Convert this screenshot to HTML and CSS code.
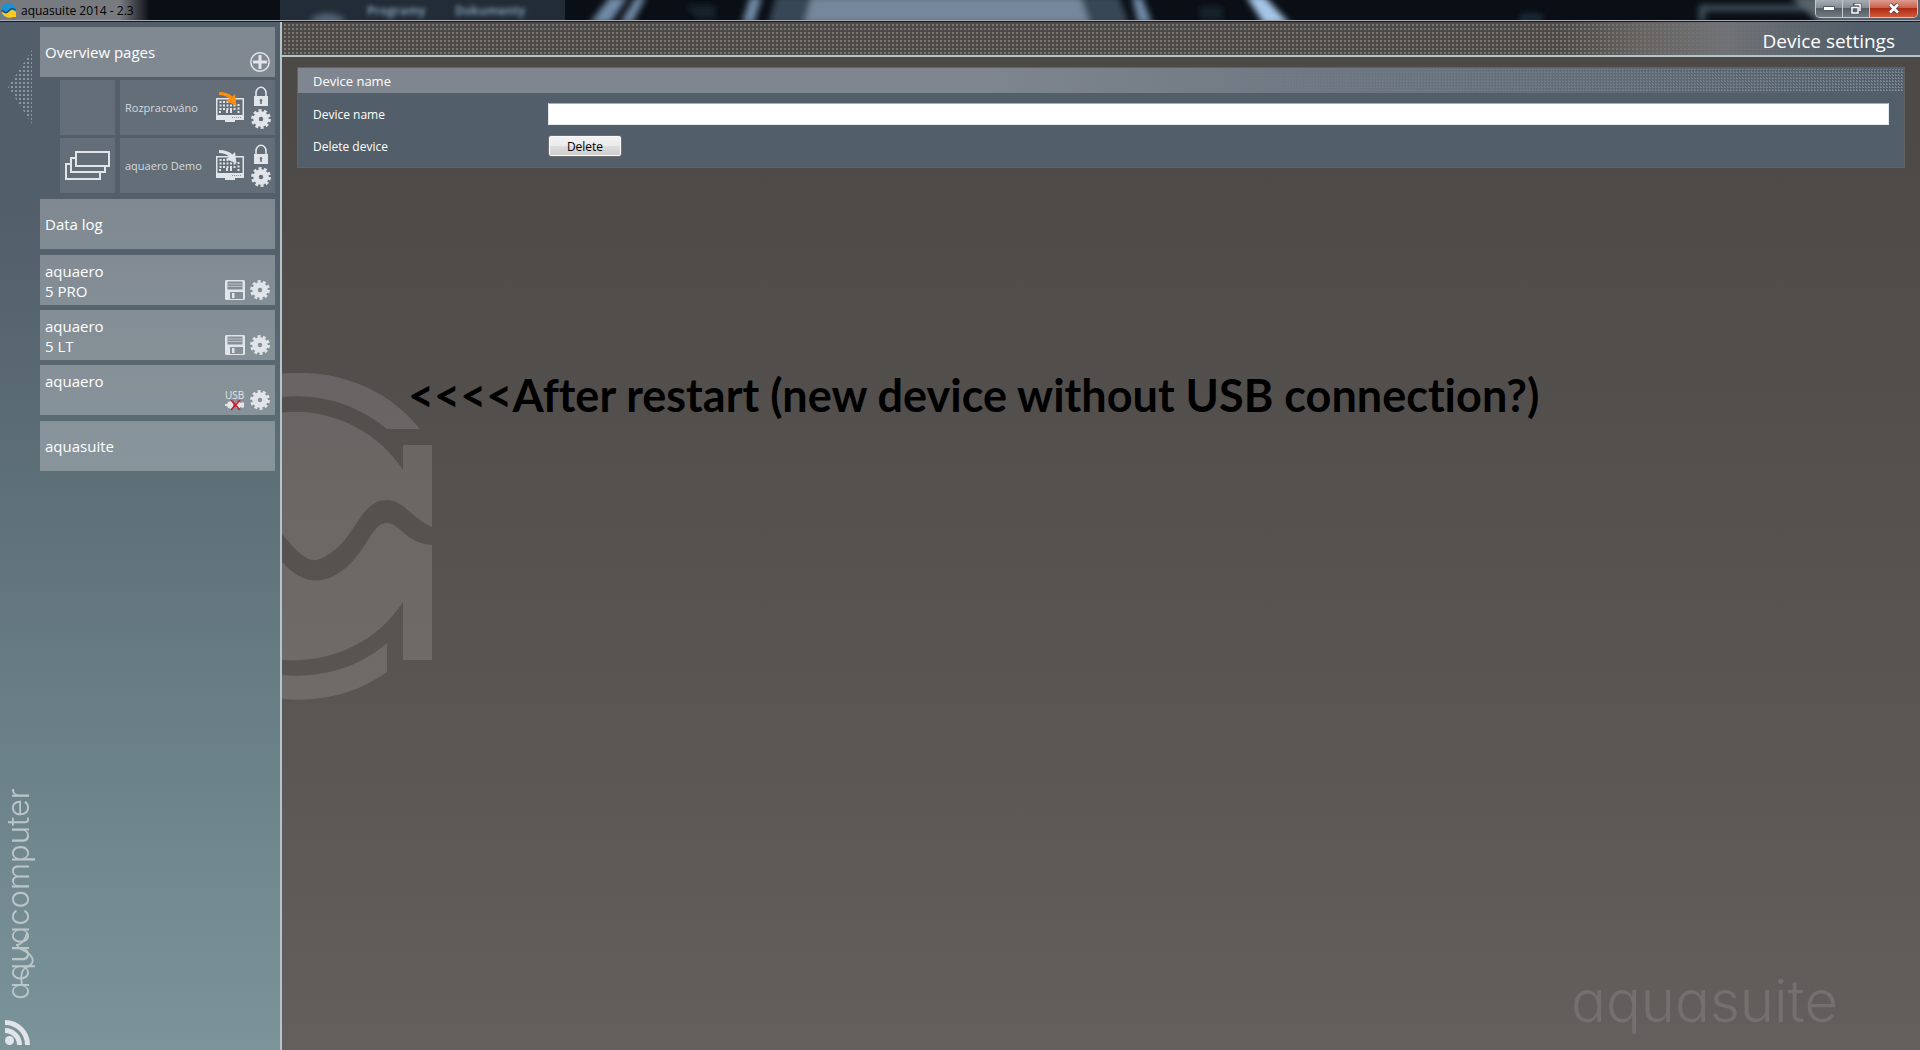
FILE: index.html
```html
<!DOCTYPE html>
<html lang="en">
<head>
  <meta charset="UTF-8" />
  <meta name="viewport" content="width=device-width, initial-scale=1.0"/>
  <title>aquasuite 2014 - 2.3</title>
  <link rel="stylesheet" href="styles.css">
</head>
<body>

<!-- shared icons -->
<svg class="defs" width="0" height="0" aria-hidden="true">
  <symbol id="gear" viewBox="0 0 20 20">
    <circle cx="10" cy="10" r="5" fill="none" stroke="currentColor" stroke-width="5.5"/>
    <circle cx="10" cy="10" r="8.3" fill="none" stroke="currentColor" stroke-width="3.2" stroke-dasharray="2.9 2.315"/>
  </symbol>
  <symbol id="lock" viewBox="0 0 14 20">
    <path d="M2 11V7a5 5.7 0 0 1 10 0v4" fill="none" stroke="currentColor" stroke-width="1.6"/>
    <path fill-rule="evenodd" fill="currentColor" d="M0 10h14v10H0zM7 13a1.4 1.4 0 0 0-.8 2.5V18h1.6v-2.500A1.400 1.400 0 0 0 7 13z"/>
  </symbol>
  <symbol id="monitor" viewBox="0 0 28 31">
    <path fill="currentColor" fill-rule="evenodd" d="M0 6h28v22H0zM1.500 7.500v15.500h25V7.500z"/>
    <path fill="currentColor" d="M9 28h10v2H9z"/>
    <path stroke="#8a939b" stroke-width="1" d="M16 25.500h9" stroke-dasharray="1 1"/>
    <path stroke="currentColor" stroke-width="2" stroke-dasharray="2 1.500" d="M3.500 10h12M3.500 13.500h16M3.500 17h16"/>
    <path stroke="currentColor" stroke-width="2" d="M4 19v2M11 18v3M15 16v5M22.500 12v2m0 1.500v2m0 1.500v2"/>
  </symbol>
  <symbol id="arrow" viewBox="0 0 28 31">
    <path fill="currentColor" d="M3 0c6 0 10 1.500 13.500 4.500L19 2l1.500 11.500L10 9l3.500-2C10.500 4 7.500 3 3 3z"/>
  </symbol>
  <symbol id="disk" viewBox="0 0 20 20">
    <path fill="currentColor" fill-rule="evenodd" d="M1 0h18l1 1v18l-1 1H1l-1-1V1zM2.500 1.500v8h15v-8zM5 12v7h13v-7z"/>
    <path stroke="currentColor" stroke-width="1" stroke-opacity=".6" d="M3 4h14M3 6.500h14"/>
    <path fill="currentColor" d="M7 13h2.500v5H7z"/>
  </symbol>
</svg>

<header class="titlebar">
  <svg class="app-icon" viewBox="0 0 15 15" aria-hidden="true">
    <circle cx="7.500" cy="7.500" r="7.400" fill="#1a92d8"/>
    <path fill="#ffc91c" d="M.5 9c2 0 3 2 5 1.500S9 7 11 7s2.500 1.500 4 1.500V14h-3c-3 1.500-9 1-11.500-5z"/>
    <path d="M.5 7.500C3 7.500 3.500 10 5.500 9.500S9 5.500 11 5.500s2.500 1.500 4 1.500" fill="none" stroke="#23435a" stroke-width="1.200"/>
  </svg>
  <span class="app-title">aquasuite 2014 - 2.3</span>
  <!-- desktop seen through the glass frame -->
  <svg class="glass" viewBox="0 0 1920 20" preserveAspectRatio="none" aria-hidden="true">
    <defs>
      <filter id="soft"><feGaussianBlur stdDeviation="3"/></filter>
      <filter id="softText"><feGaussianBlur stdDeviation="2"/></filter>
    </defs>
    <path fill="#222c36" d="M280 0h285v20H280z"/>
    <g filter="url(#softText)" fill="#7c93ab" font-size="12" font-weight="700">
      <text x="367" y="15">Programy</text>
      <text x="455" y="15">Dokumenty</text>
    </g>
    <g filter="url(#soft)">
      <path fill="#536578" d="M310 24c0-14 35-14 35 0z"/>
      <path fill="#6f8aa6" d="M610-3h18l-18 26h-20zM636-3h10l-14 26h-12zM750-3h12l-8 26h-12zM1132-3h10l10 26h-14z"/>
      <path fill="#384755" d="M776-4h343l10 28H768z"/>
      <path fill="#74879b" d="M812-4h268l10 28H804z"/>
      <path fill="#a4c6e6" d="M1246-4h18l26 28h-26z"/>
      <path fill="#16212b" d="M685 5h30v14h-18zM1200 6h22v14h-22z"/>
      <path fill="#1e2d3a" d="M1520 14h22v8h-22z"/>
      <path fill="none" stroke="#42535f" stroke-width="6" d="M1702 22V8h110"/>
      <path fill="#59636c" d="M1790-4h140v28h-110z"/>
    </g>
  </svg>
  <div class="window-buttons">
    <button type="button" aria-label="Minimize"><svg width="12" height="5"><path fill="#fff" stroke="#555a66" d="M.5.500h11v4H.5z"/></svg></button>
    <button type="button" aria-label="Restore"><svg width="12" height="12"><path fill="none" stroke="#555a66" stroke-width="3" d="M4.500 3V1.500H10V8H8.500M2 4.500h6V10H2z"/><path fill="none" stroke="#fff" stroke-width="1.500" d="M4.500 1.500H10V8M2 4.500h6V10H2z"/></svg></button>
    <button type="button" class="close" aria-label="Close"><svg width="12" height="11"><path d="M2 1.500l8 8m0-8l-8 8" stroke="#5a4a55" stroke-width="4.500"/><path d="M2 1.500l8 8m0-8l-8 8" stroke="#fff" stroke-width="2.500"/></svg></button>
  </div>
</header>

<div class="app">
  <aside class="rail">
    <button type="button" class="collapse" aria-label="Hide sidebar"></button>
    <div class="rail-bottom">
      <div class="brand">
        <span>aquacomputer</span>
        <svg width="30" height="64" viewBox="0 0 30 64" fill="none" stroke="currentColor" stroke-width="1.800" aria-hidden="true"><path d="M17 57C15 46 17 41 22 39c8-4 7-9 1-14-5-4-10-4-11-8 4 0 9-6 10-12"/></svg>
      </div>
      <a href="#" class="rss" aria-label="News feed">
        <svg viewBox="0 0 25 25"><circle cx="4.500" cy="20.500" r="4.500"/><path d="M0 10.500a14.500 14.500 0 0 1 14.500 14.500M0 2.500A22.500 22.500 0 0 1 22.500 25" fill="none" stroke="currentColor" stroke-width="5"/></svg>
      </a>
    </div>
  </aside>

  <nav class="menu">
    <section class="pages">
      <div class="item">
        <a href="#">Overview pages</a>
        <button type="button" class="icon" aria-label="Add page"><svg viewBox="0 0 20 20"><circle cx="10" cy="10" r="9.200" fill="none" stroke="currentColor" stroke-width="1.500"/><path d="M10 3v14M3 10h14" stroke="currentColor" stroke-width="3"/></svg></button>
      </div>
      <div class="page">
        <div class="thumb"></div>
        <div class="page-body">
          <a href="#">Rozpracováno</a>
          <button type="button" class="desk" aria-label="Show on desktop"><svg><use href="#monitor"/></svg><svg class="active"><use href="#arrow"/></svg></button>
          <div class="tools">
            <button type="button" class="lock" aria-label="Lock"><svg><use href="#lock"/></svg></button>
            <button type="button" class="icon" aria-label="Settings"><svg><use href="#gear"/></svg></button>
          </div>
        </div>
      </div>
      <div class="page">
        <div class="thumb">
          <svg width="45" height="29" fill="none" stroke="currentColor" stroke-width="2"><path d="M11 1h33v14H11zM11 7H6v14h34v-6M6 13H1v15h34v-7"/></svg>
        </div>
        <div class="page-body">
          <a href="#">aquaero Demo</a>
          <button type="button" class="desk" aria-label="Show on desktop"><svg><use href="#monitor"/></svg><svg><use href="#arrow"/></svg></button>
          <div class="tools">
            <button type="button" class="lock" aria-label="Lock"><svg><use href="#lock"/></svg></button>
            <button type="button" class="icon" aria-label="Settings"><svg><use href="#gear"/></svg></button>
          </div>
        </div>
      </div>
    </section>

    <div class="item"><a href="#">Data log</a></div>

    <section class="devices">
      <div class="item device">
        <a href="#">aquaero<br>5 PRO</a>
        <button type="button" class="icon" aria-label="Save"><svg><use href="#disk"/></svg></button>
        <button type="button" class="icon" aria-label="Settings"><svg><use href="#gear"/></svg></button>
      </div>
      <div class="item device">
        <a href="#">aquaero<br>5 LT</a>
        <button type="button" class="icon" aria-label="Save"><svg><use href="#disk"/></svg></button>
        <button type="button" class="icon" aria-label="Settings"><svg><use href="#gear"/></svg></button>
      </div>
      <div class="item device">
        <a href="#">aquaero</a>
        <div class="usb">
          USB
          <svg viewBox="0 0 20 10"><path fill="currentColor" d="M0 4h2c1-3 3-3 6-3v8c-3 0-5 0-6-3H0zM11 2h4v1c2-1 4-1 4 0v4c0 1-2 1-4 0v1h-4z"/><path d="M6 0l9 10m0-10L6 10" stroke="#c8202e" stroke-width="1.800"/></svg>
        </div>
        <button type="button" class="icon" aria-label="Settings"><svg><use href="#gear"/></svg></button>
      </div>
    </section>

    <div class="item"><a href="#">aquasuite</a></div>
  </nav>

  <main class="content">
    <div class="page-header"><h1>Device settings</h1></div>
    <div class="workspace">
      <svg class="logo-mark" width="150" height="328" viewBox="0 0 150 328" fill="#fff" fill-opacity=".13" aria-hidden="true">
        <path d="M0 .5C54-4 104 14 138 56H105C75 32 41 20 0 24z"/>
        <path d="M0 39.500C48 34 96 58 121 97V72h29v82c-21-9-28-27-45-27-27 0-31 38-58 54-17 12-24 7-47-20z"/>
        <path d="M0 189c24 26 46 23 69 1 19-20 22-40 36-40 13 0 18 20 45 22v115h-29v-58C96 267 54 290 0 287z"/>
        <path d="M0 302c43 4 80-10 105-32v29C72 322 38 329 0 326z"/>
      </svg>

      <section class="panel">
        <h2>Device name</h2>
        <form class="fields" onsubmit="return false;">
          <label for="deviceName">Device name</label>
          <input type="text" id="deviceName" />
          <label for="deleteDevice">Delete device</label>
          <button type="button" id="deleteDevice">Delete</button>
        </form>
      </section>

      <p class="note">&lt;&lt;&lt;&lt;After restart (new device without USB connection?)</p>
      <div class="watermark">aquasuite</div>
    </div>
  </main>
</div>

</body>
</html>
```

FILE: styles.css
```css
* { box-sizing: border-box; margin: 0; padding: 0; }

body {
  font-family: "Open Sans", "Noto Sans", sans-serif;
  font-size: 12px;
  color: #fff;
  display: flex;
  flex-direction: column;
  height: 100vh;
  overflow: hidden;
}

a { color: inherit; text-decoration: none; }
button { font: inherit; color: inherit; background: none; border: none; cursor: pointer; }
svg { display: block; }
.defs { position: absolute; }

/* title bar */
.titlebar {
  position: relative;
  display: flex;
  align-items: center;
  flex: none;
  height: 22px;
  padding: 0 2px 0 1px;
  background: #0a0e15;
  border-bottom: 1px solid #1d1720;
  box-shadow: inset 0 -1px #a9abb4;
  color: #000;
}

.glass {
  position: absolute;
  left: 0;
  top: 0;
  width: 100%;
  height: 20px;
}

.app-icon { position: relative; z-index: 1; width: 15px; height: 15px; }

.app-title {
  position: relative;
  z-index: 1;
  padding: 0 5px;
  line-height: 20px;
}

/* light glow behind the caption */
.titlebar::before {
  content: "";
  position: absolute;
  z-index: 1;
  left: 0;
  top: 0;
  width: 150px;
  height: 20px;
  background: linear-gradient(90deg, #777a7e 80%, transparent);
}

.window-buttons {
  position: relative;
  display: flex;
  align-self: flex-start;
  height: 18px;
  margin-left: auto;
  border: 1px solid #c4c7cc;
  border-top: none;
  border-radius: 0 0 5px 5px;
  overflow: hidden;
}

.window-buttons button {
  display: flex;
  align-items: center;
  justify-content: center;
  width: 27px;
  background: linear-gradient(#a8adb3 0, #858c94 45%, #555d66 50%, #727980);
  border-right: 1px solid #c4c7cc;
}

.window-buttons .close {
  width: 47px;
  border-right: none;
  background: linear-gradient(#dc9c90 0, #c9624f 45%, #b02c12 50%, #cf5a3c);
}

/* layout */
.app {
  flex: 1;
  display: grid;
  grid-template-columns: 40px 242px 1fr;
  min-height: 0;
  background: linear-gradient(#525e69 0, #525e6a 18%, #5e7078 46%, #6c8289 73%, #7a9499 100%);
}

.rail {
  display: flex;
  flex-direction: column;
  justify-content: space-between;
  padding: 28px 5px 5px;
}

.collapse {
  width: 24px;
  height: 74px;
  margin-left: 3px;
  background: conic-gradient(from 270deg, #8d969e 25%, transparent 0) -1px 0 / 4px 4px;
  clip-path: polygon(100% 0, 100% 100%, 0 50%);
}

.rail-bottom { display: flex; flex-direction: column; gap: 20px; }

.brand { position: relative; color: #bcc6c9; }

.brand span {
  display: block;
  writing-mode: vertical-rl;
  transform: rotate(180deg);
  font-family: Inter, sans-serif;
  font-feature-settings: "cv11";
  font-weight: 300;
  font-size: 31px;
  line-height: 26px;
}

.brand svg { position: absolute; left: 0; bottom: 8px; }

.rss { width: 25px; color: #e1e5ea; fill: currentColor; }

/* menu */
.menu {
  display: flex;
  flex-direction: column;
  gap: 6px;
  padding: 5px 5px 0 0;
  border-right: 2px solid #b5c4c8;
}

.item {
  display: flex;
  align-items: center;
  gap: 5px;
  height: 50px;
  padding: 5px;
  background: rgba(255, 255, 255, 0.27);
  font-size: 15px;
  line-height: 20px;
}

.item a { flex: 1; }
.device { padding-top: 6px; }
.device a { align-self: flex-start; }

.icon { width: 20px; height: 20px; color: #e1e5ea; }
.icon svg { width: 20px; height: 20px; }
.item .icon { align-self: flex-end; }

.pages { display: flex; flex-direction: column; gap: 3px; }
.devices { display: flex; flex-direction: column; gap: 5px; }

.page {
  display: flex;
  gap: 5px;
  height: 55px;
  margin-left: 20px;
  color: #e1e5ea;
}

.thumb {
  display: flex;
  align-items: center;
  justify-content: center;
  width: 55px;
  background: rgba(255, 255, 255, 0.1);
}

.page-body {
  flex: 1;
  display: flex;
  align-items: center;
  padding: 0 4px 0 5px;
  background: rgba(255, 255, 255, 0.1);
  font-size: 11px;
}

.page-body a { flex: 1; color: #d5d9dd; }

.desk { position: relative; width: 28px; height: 31px; margin-right: 7px; }
.desk svg { position: absolute; left: 0; top: 0; width: 28px; height: 31px; }
.desk .active { color: #ff8c0a; }

.tools { display: flex; flex-direction: column; align-items: center; gap: 3px; }
.lock, .lock svg { width: 14px; height: 20px; }

.usb {
  align-self: flex-end;
  width: 20px;
  font-size: 10px;
  line-height: 10px;
  color: #e1e5ea;
}

.usb svg { width: 20px; height: 10px; }

/* content */
.content {
  display: flex;
  flex-direction: column;
  background: linear-gradient(#4d4947 10%, #595553 65%, #635f5d);
}

.page-header {
  position: relative;
  display: flex;
  align-items: flex-end;
  justify-content: flex-end;
  height: 35px;
  padding-right: 25px;
  border-bottom: 2px solid #b5c4c8;
  background: linear-gradient(90deg, transparent 78%, #666361 83%, #6f7276 88%, #525e69 96%);
}

.page-header::before {
  content: "";
  position: absolute;
  inset: 0;
  background: conic-gradient(#797674 25%, transparent 0) 0 -2px / 4px 4px;
  -webkit-mask: linear-gradient(90deg, #000 80%, transparent 95%);
  mask: linear-gradient(90deg, #000 80%, transparent 95%);
}

h1 { position: relative; font-size: 19px; font-weight: 400; line-height: 28px; }

.workspace {
  position: relative;
  flex: 1;
  padding: 10px 15px 0;
}

.logo-mark { position: absolute; left: 0; top: 316px; }

.panel {
  position: relative;
  border: 1px solid #64615f;
  background: #525e69;
}

.panel h2 {
  position: relative;
  height: 25px;
  padding-left: 15px;
  background: linear-gradient(90deg, #7f868f 42%, #525e69 100%);
  font-size: 13px;
  font-weight: 400;
  line-height: 26px;
}

.panel h2::after {
  content: "";
  position: absolute;
  inset: 1px 1px 1px 50%;
  background: conic-gradient(from 270deg, #7d8892 25%, transparent 0) -1px -1px / 3px 3px;
  -webkit-mask: linear-gradient(90deg, transparent, #000);
  mask: linear-gradient(90deg, transparent, #000);
}

.fields {
  display: grid;
  grid-template-columns: 220px 1fr;
  align-items: center;
  gap: 10px 15px;
  padding: 10px 15px;
}

.fields input {
  height: 22px;
  padding: 0 4px;
  border: 1px solid #e3e9ef;
  border-top-color: #abadb3;
  background: #fff;
  font: inherit;
}

.fields button {
  justify-self: start;
  width: 74px;
  height: 22px;
  border: 1px solid #707070;
  border-radius: 3px;
  background: linear-gradient(#f3f3f3 0, #ebebeb 50%, #dddddd 50%, #cdcdcd);
  box-shadow: inset 0 0 0 1px #fafafa;
  color: #000;
}

.note {
  position: relative;
  margin: 197px 0 0 111px;
  color: #000;
  font-family: Lato, sans-serif;
  font-size: 45px;
  font-weight: 700;
  font-variant-ligatures: none;
  line-height: 60px;
  white-space: nowrap;
}

.watermark {
  position: absolute;
  right: 82px;
  bottom: 14px;
  font-family: Inter, sans-serif;
  font-feature-settings: "cv11";
  font-weight: 300;
  font-size: 58px;
  line-height: 70px;
  color: #737170;
}
```
